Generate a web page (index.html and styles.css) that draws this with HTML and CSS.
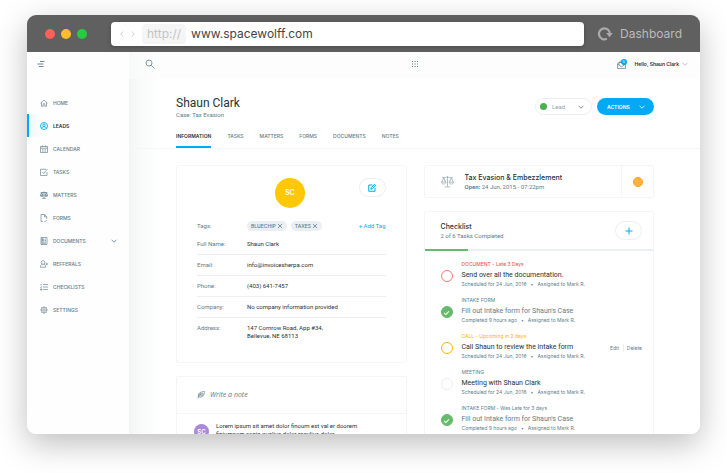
FILE: index.html
```html
<!DOCTYPE html>
<html lang="en">
<head>
<meta charset="utf-8">
<meta name="viewport" content="width=device-width, initial-scale=1">
<title>Dashboard</title>
<link rel="stylesheet" href="styles.css">
</head>
<body>
<svg width="0" height="0" hidden>
  <symbol id="chevron" viewBox="0 0 8 8"><path d="M1.5 2.7 4 5.2 6.5 2.7"/></symbol>
  <symbol id="scales" viewBox="0 0 24 24"><path d="M12 2v19M7 22h10M2 5h4c3 0 3-1 6-1s3 1 6 1h4M5 5 1.500 13M5 5l3.500 8M1 13h8c0 5-8 5-8 0zM19 5l-3.500 8M19 5l3.500 8M15 13h8c0 5-8 5-8 0z"/></symbol>
</svg>
<div class="window">
  <header class="chrome">
    <div class="lights"><span class="light red"></span><span class="light yellow"></span><span class="light green"></span></div>
    <div class="address">
      <button class="step" aria-label="Back"><svg viewBox="0 0 6 8"><path d="M4.300 1.500 1.700 4l2.600 2.500"/></svg></button>
      <button class="step" aria-label="Forward"><svg viewBox="0 0 6 8"><path d="M1.700 1.500 4.300 4 1.700 6.500"/></svg></button>
      <label class="scheme" for="url">http://</label>
      <input id="url" class="url" type="text" value="www.spacewolff.com">
    </div>
    <button class="reload" aria-label="Reload"><svg viewBox="0 0 16 16"><path class="arc" d="M9.800 12.800A5.500 5.500 0 1 1 12.900 8"/><path class="tip" d="M9.200 7h6.600l-3.300 4.200z"/></svg></button>
    <span class="page-name">Dashboard</span>
  </header>
  <div class="app">
    <aside class="sidebar">
      <button class="menu-button" aria-label="Menu"><svg class="icon fine" viewBox="0 0 8 8"><path d="M3 1.500h4.500M.5 4h6M2 6.500h4.500"/></svg></button>
      <nav class="nav">
        <a class="nav-item" href="#home"><svg class="icon" viewBox="0 0 16 16"><path d="M1 8.500 8 2l7 6.500M3 7v7.500h3.500V10.500a1.500 1.500 0 0 1 3 0v4H13V7"/></svg>HOME</a>
        <a class="nav-item active" href="#leads"><svg class="icon" viewBox="0 0 16 16"><circle cx="8" cy="8" r="7"/><circle cx="8" cy="6.500" r="2.500"/><path d="M3.500 13c.5-3 2-3.500 4.500-3.500s4 .5 4.500 3.500"/></svg>LEADS</a>
        <a class="nav-item" href="#calendar"><svg class="icon" viewBox="0 0 16 16"><path d="M1 3h14v12H1zM1 6.500h14M4.500 1v3.500M11.500 1v3.500M4 9.500h2M7 9.500h2M10 9.500h2M4 12.300h2M7 12.300h2M10 12.300h2"/></svg>CALENDAR</a>
        <a class="nav-item" href="#tasks"><svg class="icon" viewBox="0 0 16 16"><path d="M12 2.500H1V15h13V8M4.500 7.500l3 3.500L15 2"/></svg>TASKS</a>
        <a class="nav-item" href="#matters"><svg class="icon bold" viewBox="0 0 24 24"><use href="#scales"/></svg>MATTERS</a>
        <a class="nav-item" href="#forms"><svg class="icon" viewBox="0 0 16 16"><path d="M5.500 15H2V1h7l4.500 4.500V10M9 1v4.500h4.500M9 15h1.500l3-3"/></svg>FORMS</a>
        <a class="nav-item" href="#documents"><svg class="icon" viewBox="0 0 16 16"><path d="M2 1h12v14H2zM4.500 4h3v3h-3zM9.500 4H12M9.500 7H12M4.500 10H12M4.500 12.500H12M4 1v14"/></svg>DOCUMENTS<svg class="icon chevron" viewBox="0 0 8 8"><use href="#chevron"/></svg></a>
        <a class="nav-item" href="#referrals"><svg class="icon" viewBox="0 0 16 16"><circle cx="6" cy="5" r="3.700"/><path d="M4.500 8.500C1.500 9.500.5 11 .5 14.500h11c0-3.500-1-5-4-6M13.500 5.500v5M11 8h5"/></svg>REFFERALS</a>
        <a class="nav-item" href="#checklists"><svg class="icon" viewBox="0 0 16 16"><path d="M6 3h10M6 8h10M6 13h10M.5 3l1.300 1.300L4 1.500M.5 8l1.300 1.300L4 6.500M1 12h2.500v2H1z"/></svg>CHECKLISTS</a>
        <a class="nav-item" href="#settings"><svg class="icon" viewBox="0 0 16 16"><circle cx="8" cy="8" r="5.500"/><circle cx="8" cy="8" r="2.500"/><path d="M8 .5v2M8 13.500v2M.5 8h2M13.500 8h2M2.700 2.700l1.400 1.400M11.900 11.900l1.400 1.400M2.700 13.300l1.400-1.400M11.900 4.100l1.400-1.400"/></svg>SETTINGS</a>
      </nav>
    </aside>
    <main class="main">
      <div class="topbar">
        <button class="plain find" aria-label="Search"><svg class="icon search" viewBox="0 0 10 10"><circle cx="4" cy="4" r="3"/><path d="m6.200 6.200 3.200 3.200"/></svg></button>
        <button class="plain apps" aria-label="Apps"><svg viewBox="0 0 8 8"><path d="M1 1h1v1H1zM3.500 1h1v1h-1zM6 1h1v1H6zM1 3.500h1v1H1zM3.500 3.500h1v1h-1zM6 3.500h1v1H6zM1 6h1v1H1zM3.500 6h1v1h-1zM6 6h1v1H6z"/></svg></button>
        <div class="account">
          <button class="plain mail" aria-label="Messages"><svg class="icon" viewBox="0 0 16 16"><path d="M1 6.500 8 1l7 5.500V15H1zM1 7.500 8 12l7-4.500M3.500 9V4.500h9V9"/></svg><span class="badge">5</span></button>
          <button class="plain user">Hello, Shaun Clark<svg class="icon chevron" viewBox="0 0 8 8"><use href="#chevron"/></svg></button>
        </div>
      </div>
      <section class="page-head">
        <div class="title-row">
          <div><h1>Shaun Clark</h1><p class="case">Case: Tax Evasion</p></div>
          <div class="actions">
            <div class="status"><span class="status-dot"></span><select aria-label="Status"><option>Lead</option><option>Client</option></select><svg class="icon chevron" viewBox="0 0 8 8"><use href="#chevron"/></svg></div>
            <button class="action-button">ACTIONS<svg class="icon chevron" viewBox="0 0 8 8"><use href="#chevron"/></svg></button>
          </div>
        </div>
        <nav class="tabs">
          <a class="tab current" href="#information">INFORMATION</a><a class="tab" href="#t-tasks">TASKS</a><a class="tab" href="#t-matters">MATTERS</a><a class="tab" href="#t-forms">FORMS</a><a class="tab" href="#t-documents">DOCUMENTS</a><a class="tab" href="#t-notes">NOTES</a>
        </nav>
      </section>
      <div class="columns">
        <div class="column">
          <section class="card profile">
            <div class="profile-head"><span class="avatar">SC</span><button class="pill" aria-label="Edit"><svg class="icon" viewBox="0 0 16 16"><path d="M9 2H1.500v12.500H14V8M5.500 10.500l.8-3L13 .8l2.300 2.300-6.800 6.700z"/></svg></button></div>
            <dl class="details">
              <div class="detail tags"><dt>Tags:</dt><dd><span class="tag">BLUECHIP<button class="remove" aria-label="Remove BLUECHIP"><svg class="icon" viewBox="0 0 6 6"><path d="m1 1 4 4M5 1 1 5"/></svg></button></span><span class="tag">TAXES<button class="remove" aria-label="Remove TAXES"><svg class="icon" viewBox="0 0 6 6"><path d="m1 1 4 4M5 1 1 5"/></svg></button></span><button class="plain add-tag">+ Add Tag</button></dd></div>
              <div class="detail"><dt>Full Name:</dt><dd>Shaun Clark</dd></div>
              <div class="detail"><dt>Email:</dt><dd>info@invoicesherpa.com</dd></div>
              <div class="detail"><dt>Phone:</dt><dd>(403) 641-7457</dd></div>
              <div class="detail"><dt>Company:</dt><dd>No company information provided</dd></div>
              <div class="detail"><dt>Address:</dt><dd>147 Cornrow Road, App #34,<br>Bellevue, NE 68113</dd></div>
            </dl>
          </section>
          <section class="card">
            <label class="note"><svg class="icon" viewBox="0 0 16 16"><path d="M1.500 15C3 9 7 5 12 4M3 12C1 5 7 1 15.500 1 14.500 8 11 14 3.500 12M4 10.500V5.500M6.500 8V3M6 9.500l6-.3M8.500 6.500l5-.3"/></svg><input type="text" placeholder="Write a note" aria-label="Write a note"></label>
            <div class="comment"><span class="avatar small">SC</span><p>Lorem ipsum sit amet dolor finoum est val er doorem finiumsom sonia qualius dolor requlius dolor</p></div>
          </section>
        </div>
        <div class="column">
          <section class="card matter">
            <svg class="icon scales" viewBox="0 0 24 24"><use href="#scales"/></svg>
            <div class="matter-text"><h2>Tax Evasion &amp; Embezzlement</h2><p class="sub"><b>Open:</b> 24 Jun, 2015 - 07:22pm</p></div>
            <div class="matter-state"><span class="state-dot"></span></div>
          </section>
          <section class="card">
            <div class="list-head"><div><h2>Checklist</h2><p class="sub">2 of 6 Tasks Completed</p></div><button class="pill" aria-label="Add task"><svg class="icon plus" viewBox="0 0 8 8"><path d="M4 .5v7M.5 4h7"/></svg></button></div>
            <div class="progress"><div class="progress-fill"></div></div>
            <ul class="tasks">
              <li class="task late"><input type="checkbox" id="k1"><div><p class="kind">DOCUMENT - Late 3 Days</p><label for="k1">Send over all the documentation.</label><p class="meta"><span>Scheduled for 24 Jun, 2016</span><span>•</span><span>Assigned to Mark R.</span></p></div></li>
              <li class="task done"><input type="checkbox" id="k2" checked><div><p class="kind">INTAKE FORM</p><label for="k2">Fill out Intake form for Shaun's Case</label><p class="meta"><span>Completed 9 hours ago</span><span>•</span><span>Assigned to Mark R.</span></p></div></li>
              <li class="task soon"><input type="checkbox" id="k3"><div><p class="kind">CALL - Upcoming in 2 days</p><label for="k3">Call Shaun to review the intake form</label><p class="meta"><span>Scheduled for 24 Jun, 2016</span><span>•</span><span>Assigned to Mark R.</span></p></div><div class="task-actions"><button class="plain">Edit</button><button class="plain">Delete</button></div></li>
              <li class="task"><input type="checkbox" id="k4"><div><p class="kind">MEETING</p><label for="k4">Meeting with Shaun Clark</label><p class="meta"><span>Scheduled for 24 Jun, 2016</span><span>•</span><span>Assigned to Mark R.</span></p></div></li>
              <li class="task done"><input type="checkbox" id="k5" checked><div><p class="kind">INTAKE FORM - Was Late for 3 days</p><label for="k5">Fill out Intake form for Shaun's Case</label><p class="meta"><span>Completed 9 hours ago</span><span>•</span><span>Assigned to Mark R.</span></p></div></li>
            </ul>
          </section>
        </div>
      </div>
    </main>
  </div>
</div>
</body>
</html>
```
FILE: styles.css
```css
:root {
  --ink: #263238;
  --slate: #607d8b;
  --line: #eceff1;
  --blue: #03a9f4;
  --green: #66bb6a;
  --small: Inter, "Liberation Sans", sans-serif;
}
* { box-sizing: border-box; }
body {
  margin: 0;
  height: 100vh;
  padding: 15px 27px 39px;
  overflow: hidden;
  background: #fff;
  color: var(--ink);
  font: 6px/8px Roboto, "Liberation Sans", sans-serif;
}
h1, h2, p, dl, dd, ul { margin: 0; padding: 0; font-weight: 400; }
button, input, select {
  margin: 0;
  padding: 0;
  border: 0;
  background: none;
  color: inherit;
  font: inherit;
  outline: 0;
}
a { color: inherit; text-decoration: none; }
svg { display: block; flex: none; }
.icon { width: 8px; height: 8px; fill: none; stroke: var(--slate); stroke-width: 1.3; }
.icon.fine { stroke-width: .9; }
.plain, .remove { display: flex; align-items: center; }

.window {
  display: flex;
  flex-direction: column;
  height: 100%;
  overflow: hidden;
  border-radius: 9px;
  background: #fff;
  box-shadow: 0 10px 32px rgba(0, 0, 0, .26);
}

/* Browser bar */
.chrome {
  display: flex;
  flex: none;
  align-items: center;
  height: 37px;
  padding: 0 18px;
  background: #606060;
  font-family: var(--small);
}
.lights { display: flex; gap: 6px; width: 66px; }
.light { width: 10px; height: 10px; border-radius: 50%; }
.red { background: #ff5f57; }
.yellow { background: #ffbd2e; }
.green { background: #28ca42; }
.address {
  display: flex;
  flex: 1;
  align-items: center;
  height: 24px;
  padding-left: 8px;
  border-radius: 4px;
  background: #fff;
  box-shadow: 0 1px 4px rgba(0, 0, 0, .25);
}
.step { width: 6px; margin-right: 5px; }
.step svg { width: 6px; height: 8px; fill: none; stroke: #ccc; }
.scheme {
  margin-left: 1px;
  padding: 0 5px;
  border-radius: 4px;
  background: #f5f5f5;
  color: #c4c4c4;
  font-size: 12px;
  line-height: 20px;
}
.url { flex: 1; min-width: 0; margin-left: 5px; color: #444; font-size: 12px; }
.reload { margin: 0 7px 0 13px; }
.reload svg { width: 16px; height: 16px; fill: none; }
.arc { stroke: #aaa; stroke-width: 2.2; }
.tip { fill: #aaa; }
.page-name { color: #bbb; font-size: 12px; line-height: 16px; }

.app { display: flex; flex: 1; min-height: 0; }

/* Sidebar */
.sidebar { flex: none; width: 102px; background: #fefefe; }
.menu-button { display: block; margin: 8px 0 23px 10px; }
.nav-item {
  display: flex;
  align-items: center;
  gap: 5px;
  height: 23px;
  padding: 0 11px 0 13px;
  color: var(--slate);
  font-family: var(--small);
  font-size: 5px;
  font-weight: 500;
}
.nav-item.active {
  padding-left: 11px;
  border-left: 2px solid var(--blue);
  background: linear-gradient(90deg, #e9f7fe, #fefefe 12%);
  color: var(--ink);
  font-weight: 600;
}
.active .icon { stroke: var(--blue); stroke-width: 1.8; }
.icon.bold { stroke-width: 2.4; }
.nav-item .chevron { margin-left: auto; }
.icon.chevron { stroke-width: .8; }

/* Main area */
.main {
  flex: 1;
  min-width: 0;
  overflow: hidden;
  background: linear-gradient(90deg, #f3f5f5, #fafbfb 14px, #fff 32px);
}
.topbar {
  display: grid;
  grid-template-columns: 1fr auto 1fr;
  align-items: center;
  height: 27px;
  padding: 0 11px 3px;
  background: rgba(252, 252, 252, .6);
}
.find { padding-left: 5px; }
.icon.search { width: 10px; height: 10px; stroke-width: .9; opacity: .85; }
.apps svg { width: 8px; height: 8px; fill: var(--slate); }
.account { display: flex; justify-content: flex-end; gap: 9px; }
.mail { position: relative; }
.mail .icon { width: 9px; height: 9px; }
.badge {
  position: absolute;
  top: -1px;
  right: -1px;
  width: 6px;
  height: 6px;
  border-radius: 50%;
  background: var(--blue);
  color: #fff;
  font-size: 4px;
  line-height: 6px;
}
.user { gap: 2px; font-family: var(--small); font-size: 5px; font-weight: 600; }
.user .chevron { opacity: .5; }

.page-head { padding: 17px 46px 0 47px; border-bottom: 1px solid #f5f7f7; }
.title-row { display: flex; justify-content: space-between; }
h1 { font-size: 12px; line-height: 14px; }
.case { margin-top: 1px; color: var(--slate); }
.actions { display: flex; gap: 5px; padding-top: 2px; }
.status {
  display: flex;
  align-items: center;
  gap: 5px;
  width: 57px;
  height: 17px;
  padding: 0 6px 0 4px;
  border: 1px solid var(--line);
  border-radius: 9px;
  color: #90a4ae;
}
.status-dot { width: 7px; height: 7px; border-radius: 50%; background: #4caf50; }
.status select { flex: 1; min-width: 0; appearance: none; }
.action-button {
  display: flex;
  align-items: center;
  justify-content: space-between;
  width: 57px;
  height: 17px;
  padding: 0 8px 0 10px;
  border-radius: 9px;
  background: var(--blue);
  color: #fff;
  font-family: var(--small);
  font-size: 5px;
  font-weight: 600;
}
.action-button .icon { stroke: #fff; }
.tabs { display: flex; gap: 16px; margin-top: 5px; }
.tab {
  padding: 8px 0 6px;
  border-bottom: 2px solid transparent;
  color: var(--slate);
  font-family: var(--small);
  font-size: 5px;
  font-weight: 500;
}
.tab.current { border-color: var(--blue); color: var(--ink); font-weight: 600; }

.columns { display: grid; grid-template-columns: 1fr 1fr; gap: 17px; padding: 16px 46px 0 47px; }
.column { display: flex; flex-direction: column; gap: 13px; min-width: 0; }
.card { border: 1px solid #f3f5f6; border-radius: 2px; background: #fff; }
.pill {
  display: flex;
  align-items: center;
  justify-content: center;
  width: 27px;
  height: 19px;
  border: 1px solid var(--line);
  border-radius: 10px;
}
.pill .icon { stroke: var(--blue); stroke-width: 2; }
.pill .plus { stroke-width: 1; }

/* Profile */
.profile { min-height: 198px; padding: 12px 20px; }
.profile-head { display: grid; grid-template-columns: 24px 1fr 27px; align-items: start; }
.avatar {
  grid-column: 2;
  justify-self: center;
  width: 30px;
  height: 30px;
  border-radius: 50%;
  background: #ffc800;
  color: #fff;
  font-family: var(--small);
  font-size: 7px;
  font-weight: 600;
  line-height: 30px;
  text-align: center;
}
.details { margin-top: 13px; }
.detail {
  display: grid;
  grid-template-columns: 50px 1fr;
  padding: 6px 0;
  border-bottom: 1px solid var(--line);
}
.detail:last-child { border: 0; }
.detail dt { color: var(--slate); }
.detail.tags { padding: 0 0 3px; border: 0; line-height: 10px; }
.tags dd { display: flex; gap: 4px; }
.tag {
  display: flex;
  align-items: center;
  gap: 1px;
  padding: 0 4px;
  border-radius: 5px;
  background: var(--line);
  color: var(--slate);
  font-family: var(--small);
  font-size: 5px;
  font-weight: 500;
}
.remove .icon { width: 6px; height: 6px; stroke-width: .8; }
.add-tag { margin-left: auto; color: var(--blue); }

/* Notes */
.note {
  display: flex;
  align-items: center;
  gap: 5px;
  height: 37px;
  padding: 0 20px;
  border-bottom: 1px solid #f3f5f6;
}
.note input { flex: 1; min-width: 0; font: italic 7px/10px "Open Sans", sans-serif; }
.note input::placeholder { color: var(--slate); opacity: 1; }
.comment { display: flex; gap: 7px; padding: 8px 36px 8px 17px; }
.avatar.small {
  flex: none;
  width: 15px;
  height: 15px;
  margin-top: 2px;
  background: #a98ad8;
  font-size: 6px;
  line-height: 15px;
}

/* Matter and checklist */
h2 { font: 500 7px/10px var(--small); }
.sub { color: var(--slate); }
.matter { display: flex; align-items: center; padding-left: 16px; }
.icon.scales { width: 13px; height: 13px; opacity: .7; }
.matter-text { flex: 1; margin-left: 11px; }
.matter-text b { font-weight: 600; }
.matter-state {
  display: grid;
  place-items: center;
  width: 32px;
  height: 31px;
  border-left: 1px solid #f3f5f6;
}
.state-dot { width: 10px; height: 10px; border: 1px solid #ff9f1c; border-radius: 50%; background: #ffb33c; }
.list-head {
  display: flex;
  align-items: center;
  justify-content: space-between;
  height: 37px;
  padding: 0 11px 0 16px;
}
.progress { height: 2px; background: var(--line); }
.progress-fill { width: 19%; height: 100%; background: var(--green); }
.tasks { padding-top: 9px; list-style: none; }
.task {
  display: flex;
  align-items: flex-start;
  gap: 9px;
  height: 36px;
  padding: 0 11px 0 16px;
}
.task input {
  display: grid;
  flex: none;
  place-items: center;
  width: 12px;
  height: 12px;
  margin-top: 10px;
  appearance: none;
  border: 1px solid var(--line);
  border-radius: 50%;
}
.task input:checked { border-color: var(--green); background: var(--green); }
.task input:checked::after {
  content: "";
  width: 4px;
  height: 2px;
  border: solid #fff;
  border-width: 0 0 1px 1px;
  transform: rotate(-45deg);
}
.late input { border-color: #f77; }
.soon input { border-color: #ffb300; }
.kind, .meta, .task-actions { color: var(--slate); font-family: var(--small); font-size: 5px; }
.late .kind { color: #f44336; }
.soon .kind { color: #ffb300; }
.task label { display: block; margin-top: 2px; font-size: 7px; line-height: 10px; }
.done label { color: var(--slate); }
.meta { display: flex; gap: 4px; }
.task-actions { display: flex; margin: 12px 0 0 auto; }
.task-actions button + button { margin-left: 4px; padding-left: 3px; border-left: 1px solid var(--line); }
```
